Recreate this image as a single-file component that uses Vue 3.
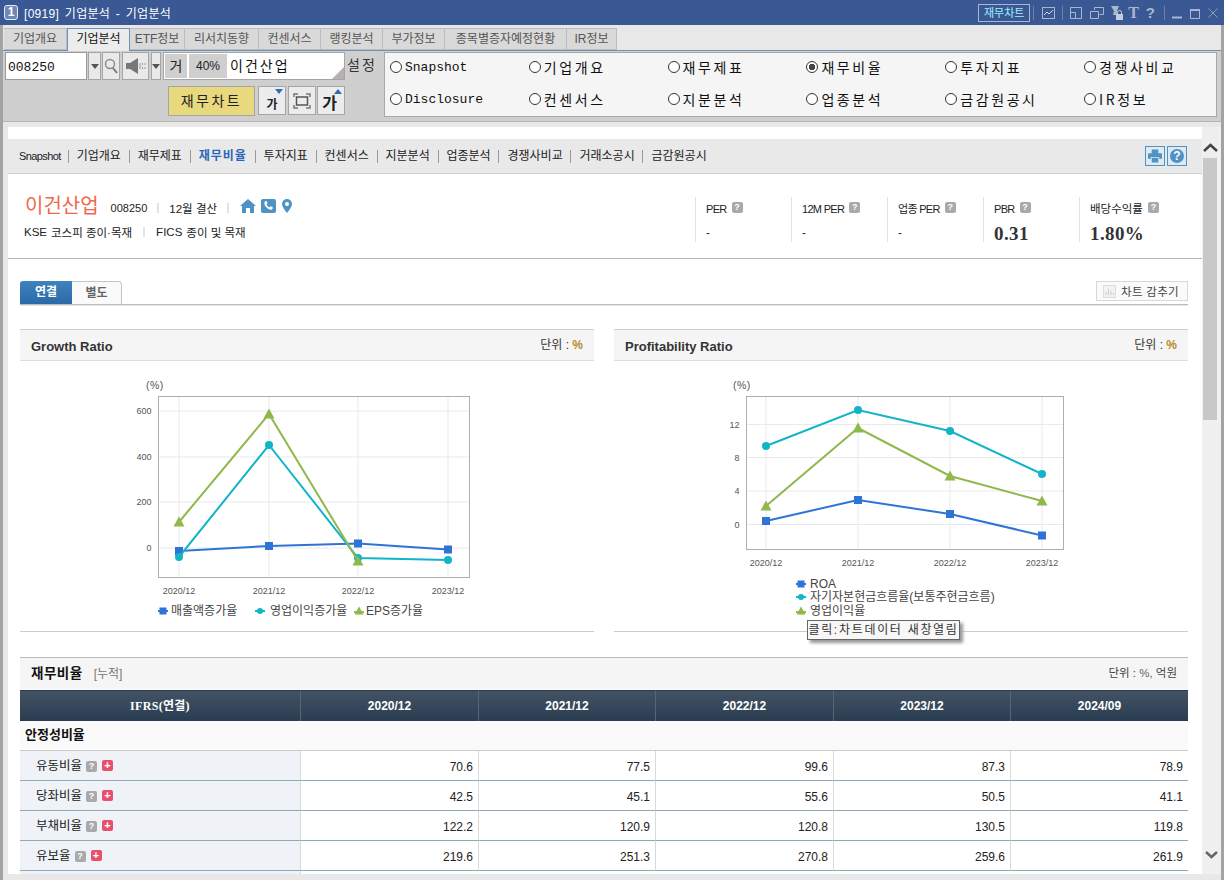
<script setup>
const tabs = [
  { t: '기업개요', w: 63 }, { t: '기업분석', w: 63, active: true }, { t: 'ETF정보', w: 55 }, { t: '리서치동향', w: 74 },
  { t: '컨센서스', w: 62 }, { t: '랭킹분석', w: 62 }, { t: '부가정보', w: 62 }, { t: '종목별증자예정현황', w: 122 }, { t: 'IR정보', w: 50 }
]
const radios = [
  { t: 'Snapshot', latin: true }, { t: '기업개요' }, { t: '재무제표' }, { t: '재무비율', on: true }, { t: '투자지표' }, { t: '경쟁사비교' },
  { t: 'Disclosure', latin: true }, { t: '컨센서스' }, { t: '지분분석' }, { t: '업종분석' }, { t: '금감원공시' }, { t: 'IR정보' }
]
const nav = ['Snapshot', '기업개요', '재무제표', '재무비율', '투자지표', '컨센서스', '지분분석', '업종분석', '경쟁사비교', '거래소공시', '금감원공시']
const stats = [
  { l: 'PER', v: '-' }, { l: '12M PER', v: '-' }, { l: '업종 PER', v: '-' },
  { l: 'PBR', v: '0.31', big: true }, { l: '배당수익률', v: '1.80%', big: true, kor: true }
]
const BLUE = '#2e74d6', TEAL = '#12b4c8', GREEN = '#90b84c'
const pts = (a) => a.map((p) => p.join(',')).join(' ')
const tri = (x, y, r = 6) => `${x},${y - r} ${x + r},${y + r - 1} ${x - r},${y + r - 1}`

const charts = [
  {
    title: 'Growth Ratio', vb: '20 361 574 270',
    box: [158.5, 396.5, 311, 181], unit: [155, 389],
    ys: [[600, 411], [400, 457], [200, 502], [0, 548]],
    xs: [[179, '2020/12'], [269, '2021/12'], [358, '2022/12'], [448, '2023/12']],
    blue: [[179, 551], [269, 546], [358, 543.5], [448, 549.5]],
    teal: [[179, 557], [269, 445], [358, 558], [448, 560]],
    green: [[179, 522], [269, 414], [358, 561]],
    legend: [
      { k: 'b', x: 163, y: 611, tx: 171, t: '매출액증가율' },
      { k: 't', x: 260, y: 611, tx: 270, t: '영업이익증가율' },
      { k: 'g', x: 359, y: 611, tx: 366, t: 'EPS증가율' }
    ]
  },
  {
    title: 'Profitability Ratio', vb: '614 361 574 270',
    box: [746.5, 396.5, 317, 153], unit: [742, 389],
    ys: [[12, 424.5], [8, 457.5], [4, 491], [0, 524.5]],
    xs: [[766, '2020/12'], [858, '2021/12'], [950, '2022/12'], [1042, '2023/12']],
    blue: [[766, 521], [858, 500], [950, 514], [1042, 535.5]],
    teal: [[766, 446], [858, 410], [950, 431], [1042, 474]],
    green: [[766, 506], [858, 428], [950, 476], [1042, 501]],
    legend: [
      { k: 'b', x: 801, y: 584, tx: 810, t: 'ROA' },
      { k: 't', x: 801, y: 597, tx: 810, t: '자기자본현금흐름율(보통주현금흐름)' },
      { k: 'g', x: 801, y: 611, tx: 810, t: '영업이익율' }
    ]
  }
]
const heads = ['2020/12', '2021/12', '2022/12', '2023/12', '2024/09']
const rows = [
  { n: '유동비율', v: ['70.6', '77.5', '99.6', '87.3', '78.9'] },
  { n: '당좌비율', v: ['42.5', '45.1', '55.6', '50.5', '41.1'] },
  { n: '부채비율', v: ['122.2', '120.9', '120.8', '130.5', '119.8'] },
  { n: '유보율', v: ['219.6', '251.3', '270.8', '259.6', '261.9'] }
]
</script>

<template>
  <div class="app">
    <header class="title">
      <span class="logo">1</span>
      <span class="title-text">[0919] 기업분석 - 기업분석</span>
      <div class="title-right">
        <span class="fin-btn">재무차트</span>
        <i class="tsep"></i>
        <svg class="ti m7" width="13" height="12" viewBox="0 0 13 12"><rect x=".5" y=".5" width="12" height="11" fill="none" stroke="#a9b6cf"/><path d="M2 8l3-3 2 2 4-4" fill="none" stroke="#cfd8e8"/></svg>
        <i class="tsep s7"></i>
        <svg class="ti" width="12" height="12" viewBox="0 0 12 12"><path d="M.5.5h11v11H.5zM.5 5.5h5v6" fill="none" stroke="#a9b6cf"/></svg>
        <svg class="ti m6" width="14" height="12" viewBox="0 0 14 12"><path d="M4.5 3V.5h9v7h-4M.5 4.5h8v7h-8z" fill="none" stroke="#a9b6cf"/></svg>
        <svg class="ti m4" width="14" height="14" viewBox="0 0 14 14"><path d="M1 0h8L7 5v4H3L4 5z" fill="#a9b6cf"/><rect x="6" y="8" width="7" height="6" fill="#c3cddf"/><path d="M7.5 8V6.5a2 2 0 0 1 4 0V8" fill="none" stroke="#c3cddf"/></svg>
        <span class="t-glyph serif">T</span>
        <span class="t-glyph q">?</span>
        <i class="tsep s7"></i>
        <svg class="ti" width="10" height="12" viewBox="0 0 10 12"><path d="M0 10.5h10" stroke="#a9b6cf" stroke-width="2"/></svg>
        <svg class="ti" width="10" height="12" viewBox="0 0 10 12"><path d="M.5 2.5h9v9h-9z" fill="none" stroke="#a9b6cf"/><path d="M0 3h10" stroke="#a9b6cf" stroke-width="2"/></svg>
        <svg class="ti" width="10" height="10" viewBox="0 0 10 10"><path d="M.5.5l9 9M9.5.5l-9 9" stroke="#8f9db9"/></svg>
      </div>
    </header>

    <div class="frame">
      <nav class="tabs">
        <span v-for="t in tabs" :key="t.t" class="tab" :class="{ active: t.active }" :style="{ width: t.w + 'px' }">{{ t.t }}</span>
      </nav>

      <section class="toolbar">
        <div class="tool-left">
          <div class="tool-row">
            <div class="code">008250</div>
            <span class="btn b-drop"><i class="caret"></i></span>
            <span class="btn b-search">
              <svg width="14" height="16" viewBox="0 0 14 16"><circle cx="6" cy="6" r="4.5" fill="none" stroke="#8a8a8a" stroke-width="1.4"/><path d="M9 10l4 5" stroke="#777" stroke-width="2"/></svg>
            </span>
            <span class="btn b-speak">
              <svg width="20" height="16" viewBox="0 0 20 16"><path d="M0 5h4l8-5v16l-8-5H0z" fill="#777"/><path d="M14 5v6M16.500 5v2m0 2v2M19 5v2m0 2v2" stroke="#999"/></svg>
            </span>
            <span class="btn b-caret"><i class="caret"></i></span>
            <div class="stock">
              <span class="geo">거</span>
              <span class="pct">40%</span>
              <span class="sname">이건산업</span>
              <i class="corner"></i>
            </div>
            <span class="setting">설정</span>
          </div>
          <div class="tool-row second">
            <span class="fin-main">재무차트</span>
            <span class="btn fb"><span class="ga">가</span><i class="mk down"></i></span>
            <span class="btn fb">
              <svg width="18" height="16" viewBox="0 0 18 16"><path d="M1 4V1h4M13 1h4v3M17 12v3h-4M5 15H1v-3" fill="none" stroke="#777" stroke-width="1.500"/><rect x="3.500" y="4" width="11" height="8" fill="none" stroke="#555" stroke-width="1.500"/></svg>
            </span>
            <span class="btn fb last"><span class="ga lg">가</span><i class="mk up"></i></span>
          </div>
        </div>
        <div class="radios">
          <label v-for="r in radios" :key="r.t" class="radio" :class="{ latin: r.latin }">
            <i class="circle" :class="{ on: r.on }"></i>{{ r.t }}
          </label>
        </div>
      </section>

      <div class="body">
        <main class="main">
          <div class="subnav">
            <span v-for="(n, i) in nav" :key="n" class="nav-item" :class="{ first: i === 0, cur: n === '재무비율' }">{{ n }}</span>
            <div class="nav-icons">
              <span class="nic">
                <svg width="14" height="14" viewBox="0 0 15 14"><path d="M4 0h7v4H4zM1 4h13a1 1 0 0 1 1 1v5h-3V8H3v2H0V5a1 1 0 0 1 1-1zM4 9h7v5H4z" fill="#4f93c4"/></svg>
              </span>
              <span class="nic"><span class="help">?</span></span>
            </div>
          </div>

          <div class="company">
            <div class="co-left">
              <div class="co-row1">
                <span class="co-name">이건산업</span>
                <span class="co-code">008250</span>
                <i class="vsep"></i>
                <span class="co-txt">12월 결산</span>
                <i class="vsep"></i>
                <svg class="ic1" width="16" height="14" viewBox="0 0 16 14"><path d="M8 0l8 7h-2v7H10V9H6v5H2V7H0z" fill="#4f93c4"/></svg>
                <svg class="ic2" width="15" height="14" viewBox="0 0 15 14"><rect width="15" height="14" rx="2" fill="#4f93c4"/><path d="M3.500 3c.5-1 1.800-1.200 2.300-.5l.8 1.800-1 1c.5 1.500 1.500 2.500 3 3l1-1 1.900.8c.5.700.2 1.800-.5 2.400C8 11.500 2.500 7 3.500 3z" fill="#fff"/></svg>
                <svg class="ic3" width="10" height="14" viewBox="0 0 10 14"><path d="M5 0a5 5 0 0 1 5 5c0 3-5 9-5 9S0 8 0 5a5 5 0 0 1 5-5z" fill="#4f93c4"/><circle cx="5" cy="5" r="2" fill="#fff"/></svg>
              </div>
              <div class="co-row2">
                <span>KSE</span><span class="g1">코스피 종이·목재</span>
                <i class="vsep s2"></i>
                <span>FICS</span><span class="g2">종이 및 목재</span>
              </div>
            </div>
            <div class="stats">
              <div v-for="s in stats" :key="s.l" class="stat">
                <div class="stat-l" :class="{ kor: s.kor }"><span class="stat-name">{{ s.l }}</span><span class="qm">?</span></div>
                <div class="stat-v" :class="{ big: s.big }">{{ s.v }}</div>
              </div>
            </div>
          </div>

          <div class="content">
            <div class="ctabs">
              <span class="ctab on">연결</span>
              <span class="ctab">별도</span>
              <span class="hide-btn">
                <svg width="13" height="13" viewBox="0 0 13 13"><rect x=".5" y=".5" width="12" height="12" fill="#f2f2f2" stroke="#ddd"/><path d="M3 10V7m2.500 3V4m2.500 6V6m2.500 4V8" stroke="#ccc"/></svg>
                차트 감추기
              </span>
            </div>

            <div class="charts">
              <div v-for="c in charts" :key="c.title" class="panel">
                <div class="panel-head">
                  <b>{{ c.title }}</b>
                  <span class="unit">단위 : <em>%</em></span>
                </div>
                <svg class="chart" width="574" height="270" :viewBox="c.vb">
                  <text class="ax unit-t" :x="c.unit[0] - 9" :y="c.unit[1]">(%)</text>
                  <g stroke="#e9e9ee">
                    <line v-for="y in c.ys" :key="y[0]" :x1="c.box[0]" :x2="c.box[0] + c.box[2]" :y1="y[1]" :y2="y[1]"/>
                    <line v-for="x in c.xs" :key="x[1]" :x1="x[0]" :x2="x[0]" :y1="c.box[1]" :y2="c.box[1] + c.box[3]"/>
                  </g>
                  <rect :x="c.box[0]" :y="c.box[1]" :width="c.box[2]" :height="c.box[3]" fill="none" stroke="#aeaeae"/>
                  <text v-for="y in c.ys" :key="'y' + y[0]" class="ax" :x="c.box[0] - 7" :y="y[1] + 3" text-anchor="end">{{ y[0] }}</text>
                  <text v-for="x in c.xs" :key="'x' + x[1]" class="ax" :x="x[0]" :y="c.box[3] + c.box[1] + 16" text-anchor="middle">{{ x[1] }}</text>

                  <polyline :points="pts(c.blue)" fill="none" :stroke="BLUE" stroke-width="2"/>
                  <rect v-for="p in c.blue" :key="'b' + p[0]" :x="p[0] - 4" :y="p[1] - 4" width="8" height="8" :fill="BLUE"/>
                  <polyline :points="pts(c.teal)" fill="none" :stroke="TEAL" stroke-width="2"/>
                  <circle v-for="p in c.teal" :key="'t' + p[0]" :cx="p[0]" :cy="p[1]" r="4" :fill="TEAL"/>
                  <polyline :points="pts(c.green)" fill="none" :stroke="GREEN" stroke-width="2"/>
                  <polygon v-for="p in c.green" :key="'g' + p[0]" :points="tri(p[0], p[1], 5.500)" :fill="GREEN"/>

                  <g v-for="l in c.legend" :key="l.t">
                    <template v-if="l.k === 'b'">
                      <line :x1="l.x - 5" :x2="l.x + 5" :y1="l.y" :y2="l.y" :stroke="BLUE" stroke-width="2"/>
                      <rect :x="l.x - 3.500" :y="l.y - 3.500" width="7" height="7" :fill="BLUE"/>
                    </template>
                    <template v-else-if="l.k === 't'">
                      <line :x1="l.x - 5" :x2="l.x + 5" :y1="l.y" :y2="l.y" :stroke="TEAL" stroke-width="2"/>
                      <circle :cx="l.x" :cy="l.y" r="3" :fill="TEAL"/>
                    </template>
                    <template v-else>
                      <line :x1="l.x - 5" :x2="l.x + 5" :y1="l.y + 1" :y2="l.y + 1" :stroke="GREEN" stroke-width="2"/>
                      <polygon :points="tri(l.x, l.y, 4.500)" :fill="GREEN"/>
                    </template>
                    <text class="lg-t" :x="l.tx" :y="l.y + 4">{{ l.t }}</text>
                  </g>
                </svg>
                <div v-if="c.title === 'Profitability Ratio'" class="tip">클릭:차트데이터 새창열림</div>
              </div>
            </div>

            <div class="t-head">
              <b>재무비율</b><span class="cum">[누적]</span>
              <span class="t-unit">단위 : <em>%,</em> 억원</span>
            </div>
            <table class="grid">
              <colgroup>
                <col class="c0"/><col class="c1"/><col class="c2"/><col class="c1"/><col class="c2"/><col class="c2"/>
              </colgroup>
              <thead>
                <tr><th class="th0">IFRS(연결)</th><th v-for="h in heads" :key="h">{{ h }}</th></tr>
              </thead>
              <tbody>
                <tr class="grp"><td colspan="6">안정성비율</td></tr>
                <tr v-for="r in rows" :key="r.n">
                  <td class="lab">{{ r.n }}<span class="qm q2">?</span><span class="plus">+</span></td>
                  <td v-for="(v, i) in r.v" :key="i" class="num">{{ v }}</td>
                </tr>
                <tr><td class="lab"></td><td class="num" colspan="5"></td></tr>
              </tbody>
            </table>
          </div>
        </main>

        <aside class="scroll">
          <div class="sc-up"><svg width="15" height="9" viewBox="0 0 15 9"><path d="M1 8l6.500-6L14 8" fill="none" stroke="#444" stroke-width="2.500"/></svg></div>
          <div class="sc-thumb"></div>
          <div class="sc-down"><svg width="13" height="8" viewBox="0 0 13 8"><path d="M1 1l5.500 5L12 1" fill="none" stroke="#666" stroke-width="2.500"/></svg></div>
        </aside>
      </div>
    </div>
  </div>
</template>

<style>
html, body { margin: 0; padding: 0; background: #e8e8e8; }
</style>

<style scoped>
* { box-sizing: border-box; }
i, em { font-style: normal; }
.app { width: 1224px; height: 880px; overflow: hidden; display: flex; flex-direction: column; font: 12px "Liberation Sans", "Noto Sans CJK KR", sans-serif; color: #222; }

/* title */
.title { height: 25px; flex: none; background: #3a5893; display: flex; align-items: center; padding-left: 4px; color: #fff; }
.logo { width: 14px; height: 15px; border: 1px solid #e8edf6; border-radius: 3px; background: #7088b6; color: #fff; font: bold 12px/13px "Liberation Sans", sans-serif; text-align: center; }
.title-text { margin-left: 6px; font-size: 12px; letter-spacing: .3px; word-spacing: 2px; }
.title-right { margin-left: auto; display: flex; align-items: center; }
.fin-btn { width: 52px; height: 18px; border: 1px solid #a9b6cf; color: #9ff0ff; text-align: center; line-height: 16px; font-size: 11px; margin-right: 3px; }
.tsep { width: 1px; height: 14px; background: #6f81a8; margin-right: 8px; }
.tsep.s7 { margin-right: 7px; }
.ti { flex: none; margin-right: 8px; }
.ti.m7 { margin-right: 7px; }
.ti.m6 { margin-right: 6px; }
.ti.m4 { margin-right: 4px; }
.t-glyph { color: #a9b6cf; margin-right: 7px; font-size: 15px; line-height: 18px; }
.t-glyph.serif { font: bold 16px "Liberation Serif", serif; }
.t-glyph.q { font-weight: bold; margin-right: 9px; }
.title-right > svg:last-child { margin-right: 6px; }

/* frame */
.frame { flex: 1; min-height: 0; border-left: 3px solid #a3a3a3; border-right: 3px solid #a3a3a3; display: flex; flex-direction: column; background: #e8e8e8; }
.tabs { height: 26px; flex: none; padding: 3px 0 0 1px; display: flex; border-bottom: 1px solid #6a93b9; }
.tab { height: 22px; background: #d9d9d9; border: 1px solid #bdbdbd; border-left: 0; text-align: center; line-height: 20px; color: #555; flex: none; }
.tab:first-child { border-left: 0; }
.tab.active { background: #ececec; color: #111; border: 1px solid #6a93b9; border-bottom: 0; height: 23px; }

.toolbar { height: 71px; flex: none; background: #cfcfcf; display: flex; border-bottom: 1px solid #b4b4b4; }
.tool-left { width: 381px; flex: none; padding: 1px 0 0 2px; }
.tool-row { display: flex; height: 28px; align-items: stretch; }
.tool-row.second { margin-top: 6px; padding-left: 163px; height: 30px; }
.code { width: 82px; background: #fff; border: 1px solid #9a9a9a; font: 13px/30px "Liberation Mono", monospace; padding-left: 2px; color: #111; }
.btn { background: #e9e9e9; border: 1px solid #a5a5a5; display: flex; align-items: center; justify-content: center; flex: none; position: relative; }
.b-drop { width: 13px; margin-left: 1px; }
.b-search { width: 18px; margin-left: 1px; }
.b-speak { width: 27px; margin-left: 2px; }
.b-caret { width: 10px; margin-left: 2px; }
.caret { width: 0; height: 0; border: 4px solid transparent; border-top: 5px solid #555; border-bottom: 0; }
.stock { width: 182px; margin-left: 2px; background: #fff; border: 1px solid #a5a5a5; display: flex; position: relative; padding: 1px; }
.geo { width: 22px; background: #cfcfcf; text-align: center; line-height: 24px; font-size: 14px; }
.pct { width: 38px; margin-left: 2px; background: #cfcfcf; text-align: center; line-height: 24px; font-size: 12px; }
.sname { margin-left: 3px; font-size: 14px; line-height: 24px; letter-spacing: 2px; color: #111; }
.corner { position: absolute; right: 0; bottom: 0; width: 0; height: 0; border-left: 12px solid transparent; border-bottom: 12px solid #b5b0b0; }
.setting { margin-left: 2px; font-size: 14px; line-height: 27px; letter-spacing: 2px; color: #333; }
.fin-main { width: 87px; background: #e8d87e; border: 1px solid #a5a5a5; text-align: center; line-height: 28px; font-size: 14px; letter-spacing: 2.5px; color: #222; }
.fb { width: 28px; margin-left: 2px; height: 29px; background: #ececec; }
.fb.last { margin-left: 1px; }
.fin-main + .fb { margin-left: 3px; }
.ga { font-size: 12px; font-weight: bold; margin-top: 6px; color: #222; }
.ga.lg { font-size: 16px; margin-top: 3px; margin-left: -3px; }
.mk { position: absolute; width: 0; height: 0; right: 2px; top: 2px; border-left: 4px solid transparent; border-right: 4px solid transparent; }
.mk.down { border-top: 5px solid #2a6cb5; }
.mk.up { border-bottom: 5px solid #2a6cb5; }

.radios { width: 833px; margin-top: 1px; height: 65px; background: #f5f5f5; border: 1px solid #a8a8a8; display: grid; grid-template-columns: repeat(6, 138.8px); grid-template-rows: 28px 36px; padding: 0 0 0 5px; }
.radio { display: flex; align-items: center; font: 14px "Noto Sans CJK KR", sans-serif; letter-spacing: 2.6px; color: #111; }
.radio.latin { font: 13px "Liberation Mono", monospace; letter-spacing: 0; }
.circle { width: 12px; height: 12px; border: 1px solid #333; border-radius: 50%; background: #fff; margin-right: 3px; flex: none; position: relative; }
.circle.on { background: radial-gradient(circle, #444 0 3px, #fff 3.5px); }

/* body */
.body { flex: 1; min-height: 0; display: flex; padding: 5px 0 6px 5px; }
.main { width: 1194px; background: #fff; overflow: hidden; flex: none; padding-top: 12px; }
.subnav { height: 35px; background: #e9e9e9; border-bottom: 1px solid #cfcfcf; display: flex; align-items: center; padding-left: 3px; }
.nav-item { padding: 0 7.8px 0 8px; border-left: 1px solid #999; line-height: 13px; font-size: 12px; color: #222; flex: none; }
.nav-item.first { border-left: 0; font-size: 11px; letter-spacing: -.6px; padding-right: 7px; }
.nav-item.cur { color: #2a66b8; font-weight: bold; letter-spacing: 1px; }
.nav-icons { margin-left: auto; margin-right: 15px; display: flex; gap: 2px; }
.nic { width: 20px; height: 20px; border: 1px solid #4f93c4; background: #dfe9f1; display: flex; align-items: center; justify-content: center; }
.help { width: 14px; height: 14px; border-radius: 50%; background: #4f93c4; color: #fff; font: bold 12px/14px "Liberation Sans", sans-serif; text-align: center; }

.company { height: 85px; border-bottom: 1px solid #b4b4b4; display: flex; justify-content: space-between; }
.co-left { padding: 20px 0 0 16px; }
.co-row1 { display: flex; align-items: center; height: 24px; }
.co-name { font-size: 20px; color: #f0674d; margin-left: 1px; line-height: 24px; }
.co-code { margin-left: 12px; font-size: 11px; margin-top: 4px; }
.co-txt { font-size: 11.5px; margin-top: 3px; }
.vsep { width: 2px; height: 10px; background: #dfe4ec; margin: 3px 10px 0; flex: none; }
.ic1 { margin-left: 1px; }
.ic2 { margin-left: 5px; }
.ic3 { margin-left: 6px; }
.co-row2 { display: flex; align-items: center; margin-top: 6px; font-size: 11.500px; height: 16px; }
.g1 { margin-left: 4px; }
.g2 { margin-left: 4px; }
.vsep.s2 { margin: 0 11px 0 11px; }
.stats { display: flex; width: 507px; padding: 23px 27px 0 0; }
.stat { width: 96px; height: 45px; border-left: 1px solid #e2e2e2; padding-left: 10px; }
.stat-l { font-size: 11px; line-height: 14px; margin-top: 5px; display: flex; align-items: flex-start; color: #222; }
.stat-name { letter-spacing: -.7px; }
.stat-l.kor .stat-name { letter-spacing: 0; font-size: 11.5px; }
.qm { width: 11px; height: 11px; border-radius: 2px; background: #a9a9a9; color: #fff; font: bold 9px/11px "Liberation Sans", sans-serif; text-align: center; margin-left: 5px; flex: none; }
.stat-v { margin-top: 9px; font-size: 12px; line-height: 16px; color: #333; }
.stat-v.big { font: bold 19px/18px "Liberation Serif", serif; letter-spacing: .4px; color: #333; }

.content { padding: 22px 14px 0 12px; }
.ctabs { display: flex; height: 24px; border-bottom: 1px solid #bdbdbd; box-shadow: 0 1px 0 #e6e6e6; align-items: flex-start; }
.ctab { width: 50px; height: 23px; border: 1px solid #c4c4c4; border-left: 0; border-bottom: 0; border-radius: 0 4px 0 0; text-align: center; font-weight: bold; line-height: 22px; color: #666; background: #fafafa; }
.ctab.on { width: 52px; background: linear-gradient(#3f82bd, #2a6aa8); color: #fff; border: 0; border-radius: 3px 0 0 0; line-height: 23px; }
.hide-btn { margin-left: auto; width: 92px; height: 20px; border: 1px solid #d8d8d8; background: #fafafa; display: flex; align-items: center; padding-left: 6px; gap: 5px; color: #444; font-size: 11.5px; letter-spacing: .3px; }

.charts { display: grid; grid-template-columns: 574px 574px; gap: 20px; margin-top: 24px; }
.panel { position: relative; border-bottom: 1px solid #ccc; height: 303px; }
.panel-head { height: 32px; background: #f5f5f5; border-top: 1px solid #cfcfcf; border-bottom: 1px solid #ddd; display: flex; align-items: center; justify-content: space-between; padding: 1px 11px 0; }
.panel-head b { font-size: 13px; color: #333; margin-top: 1px; }
.unit { font-size: 12px; color: #333; margin-top: -5px; }
.unit em, .t-unit em { color: #b58a2a; font-weight: bold; }
.chart { display: block; }
.ax { font: 9px "Liberation Sans", sans-serif; fill: #555; }
.unit-t { font-size: 10.5px; letter-spacing: .5px; }
.lg-t { font: 12px "Liberation Sans", "Noto Sans CJK KR", sans-serif; fill: #444; }
.tip { position: absolute; left: 193px; top: 291px; width: 153px; height: 20px; background: #f7f7f7; border: 1px solid #666; box-shadow: 3px 3px 3px #999; font-size: 12px; line-height: 18px; letter-spacing: 1.7px; text-align: center; white-space: nowrap; color: #333; }

.t-head { margin-top: 25px; height: 32px; border-top: 1px solid #bbb; background: #f5f5f5; display: flex; align-items: center; padding: 0 11px 3px; }
.t-head b { font-size: 13.5px; letter-spacing: .5px; color: #111; }
.cum { margin-left: 11px; color: #777; font-size: 12px; }
.t-unit { margin-left: auto; font-size: 11.500px; color: #444; }
.t-unit em { color: #666; font-weight: normal; }
.grid { width: 1168px; margin-top: 1px; table-layout: fixed; border-collapse: separate; border-spacing: 0; }
.c0 { width: 281px; } .c1 { width: 178px; } .c2 { width: 177px; }
.grid th { height: 31px; padding: 0; background: linear-gradient(#415364, #2a3c50); border-top: 1px solid #2d3b4a; border-right: 1px solid #556676; color: #fff; font-size: 12px; font-weight: bold; }
.grid th:last-child { border-right: 0; }
.th0 { font-family: "Liberation Serif", "Noto Sans CJK KR", serif; letter-spacing: .3px; padding-bottom: 2px !important; }
.grid td { height: 30px; padding: 0; border-bottom: 1px solid #8fa8b8; }
.grp td { background: #fafafa; font-weight: bold; font-size: 13px; color: #111; padding-left: 5px; border-bottom: 1px solid #ccc; padding-bottom: 4px; }
.lab { background: #eff2f7; padding-left: 16px !important; padding-bottom: 2px !important; border-right: 1px solid #d9d9d9; font-size: 12.500px; color: #222; }
.q2 { display: inline-block; margin-left: 4px; vertical-align: 1px; }
.plus { display: inline-block; width: 11px; height: 11px; border-radius: 2px; background: #e84f6c; color: #fff; font: bold 11px/10px "Liberation Sans", sans-serif; text-align: center; margin-left: 5px; vertical-align: 1px; }
.num { text-align: right; padding-right: 5px !important; border-right: 1px solid #d9d9d9; font-size: 12px; color: #222; padding-top: 2px !important; }
.num:last-child { border-right: 0; }

.scroll { width: 19px; flex: none; background: #f0f0f0; display: flex; flex-direction: column; padding-left: 1px; }
.sc-up { height: 31px; width: 14px; background: #eeeeee; display: flex; align-items: flex-end; justify-content: center; padding-bottom: 6px; overflow: visible; }
.sc-up svg, .sc-down svg { flex: none; }
.sc-thumb { width: 14px; height: 262px; background: #c8c8c8; }
.sc-down { margin-top: auto; height: 30px; width: 16px; display: flex; justify-content: center; padding-top: 7px; }
</style>
